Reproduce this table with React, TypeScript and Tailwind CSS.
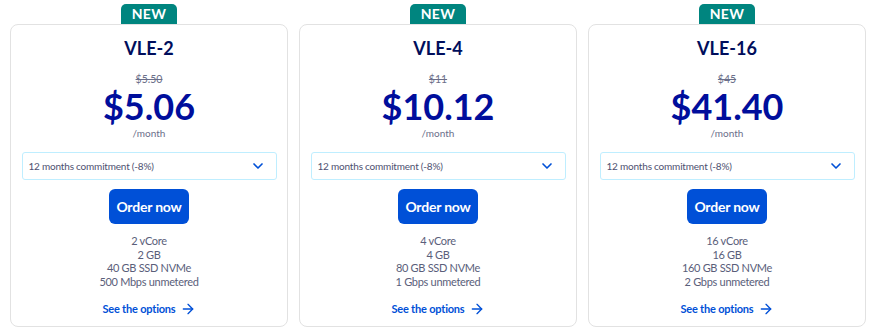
import { ChevronDown, ArrowRight } from 'lucide-react';

type Plan = {
  name: string;
  oldPrice: string;
  price: string;
  specs: string[];
};

const plans: Plan[] = [
  { name: 'VLE-2', oldPrice: '$5.50', price: '$5.06', specs: ['2 vCore', '2 GB', '40 GB SSD NVMe', '500 Mbps unmetered'] },
  { name: 'VLE-4', oldPrice: '$11', price: '$10.12', specs: ['4 vCore', '4 GB', '80 GB SSD NVMe', '1 Gbps unmetered'] },
  { name: 'VLE-16', oldPrice: '$45', price: '$41.40', specs: ['16 vCore', '16 GB', '160 GB SSD NVMe', '2 Gbps unmetered'] },
];

function PlanCard({ plan }: { plan: Plan }) {
  return (
    <div className="flex flex-col items-center w-[278px]">
      <div className="h-[20px] px-[11px] bg-[#00857f] rounded-t-[5px] text-white font-bold text-[14px] leading-[20px] tracking-wide">
        NEW
      </div>
      <div className="w-full h-[303px] border border-[#e2e2e2] rounded-lg bg-white flex flex-col items-center">
        <h3 className="mt-[11px] text-[18px] leading-[24px] font-bold text-[#000e5c]">{plan.name}</h3>
        <div className="mt-[13px] text-[10.5px] leading-[13px] text-[#6b6f8a] line-through">{plan.oldPrice}</div>
        <div className="mt-[2px] text-[36px] leading-[36px] font-bold text-[#000e9c]">{plan.price}</div>
        <div className="mt-[3px] text-[10px] leading-[12px] text-[#6b6f8a]">/month</div>
        <div className="mt-[13px] w-[255px] h-[28px] shrink-0 border border-[#bfeeff] rounded-[3px] flex items-center justify-between pl-[6px] pr-[10px]">
          <span className="text-[10px] tracking-[-0.2px] text-[#4d5070]">12 months commitment (-8%)</span>
          <ChevronDown className="w-4 h-4 text-[#0050d7]" strokeWidth={2.5} />
        </div>
        <button className="mt-[9px] w-[80px] h-[35px] shrink-0 bg-[#0050d7] rounded-md text-white font-bold text-[14px] tracking-[-0.2px]">
          Order now
        </button>
        <div className="mt-[10px] flex flex-col items-center text-[11px] leading-[13.7px] tracking-[-0.3px] text-[#5a5e7a]">
          {plan.specs.map(s => <div key={s}>{s}</div>)}
        </div>
        <a className="mt-[12px] flex items-center gap-1 text-[11px] leading-[16px] font-bold tracking-[-0.2px] text-[#0050d7]">
          See the options <ArrowRight className="w-4 h-4" strokeWidth={2} />
        </a>
      </div>
    </div>
  );
}

export default function App() {
  return (
    <div className="w-[880px] h-[329px] bg-white flex gap-[11px] pl-[10px] pt-[4px] font-['Lato',sans-serif]">
      {plans.map(p => <PlanCard key={p.name} plan={p} />)}
    </div>
  );
}
